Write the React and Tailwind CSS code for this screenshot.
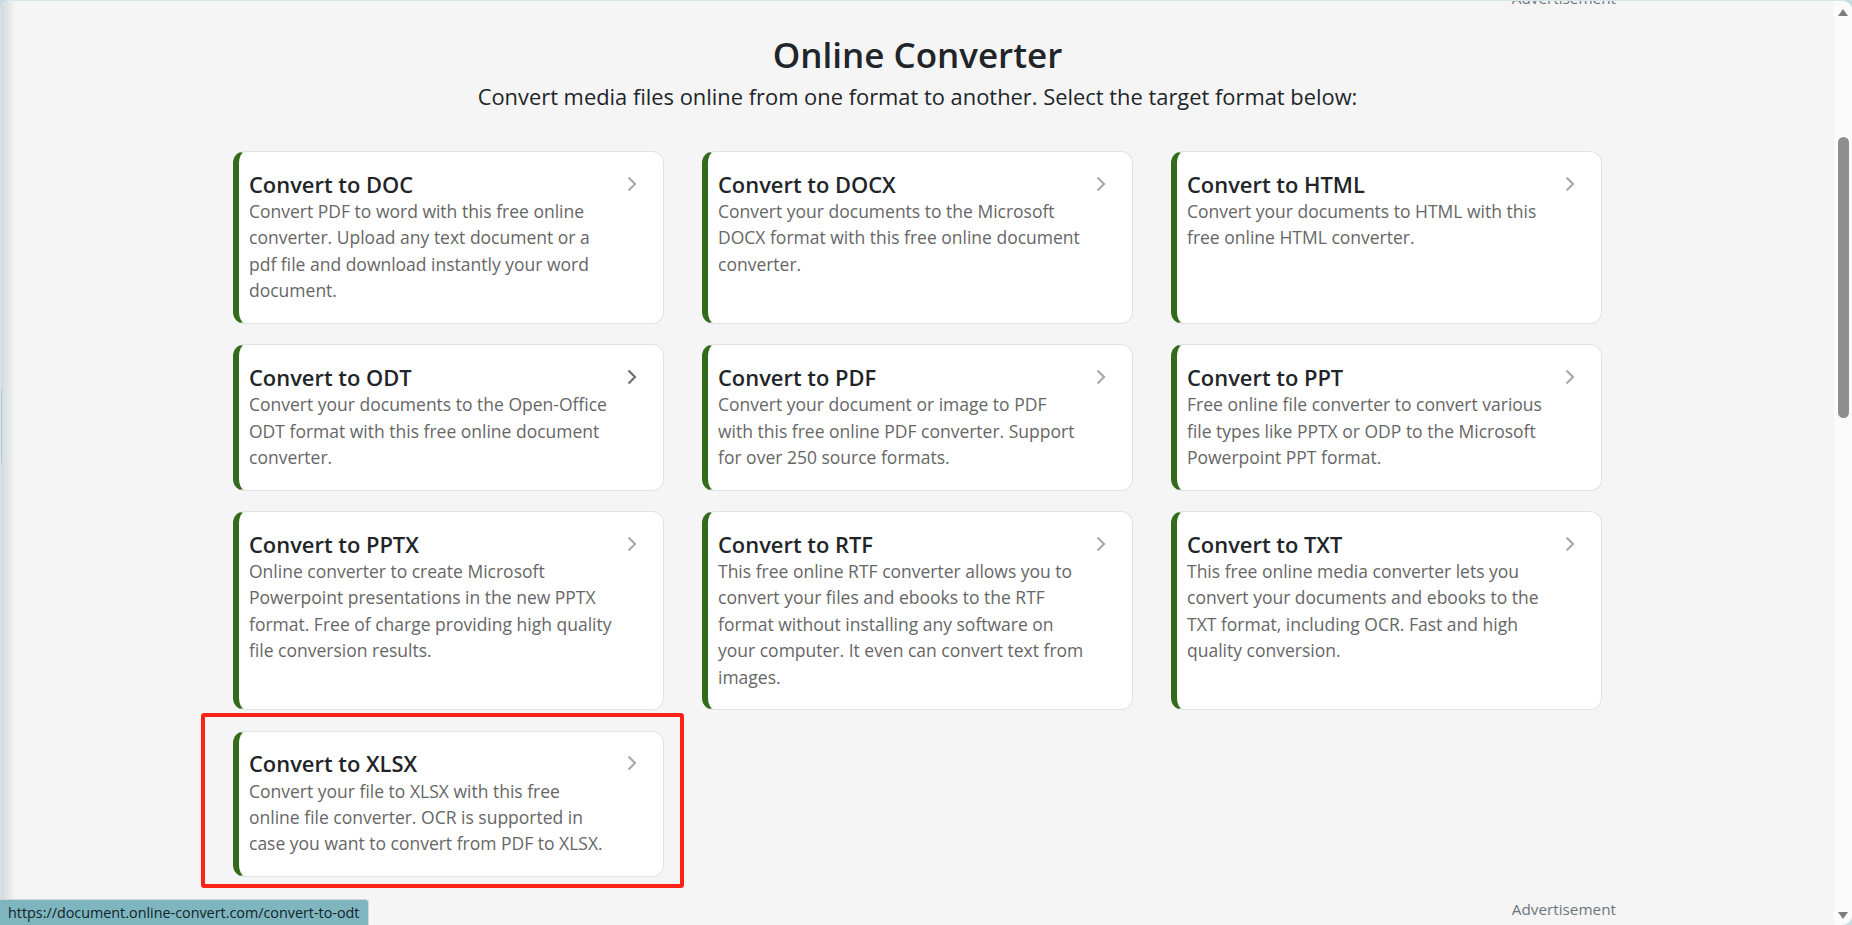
const cards = [
  ["Convert to DOC", "Convert PDF to word with this free online converter. Upload any text document or a pdf file and download instantly your word document."],
  ["Convert to DOCX", "Convert your documents to the Microsoft DOCX format with this free online document converter."],
  ["Convert to HTML", "Convert your documents to HTML with this free online HTML converter."],
  ["Convert to ODT", "Convert your documents to the Open-Office ODT format with this free online document converter.", true],
  ["Convert to PDF", "Convert your document or image to PDF with this free online PDF converter. Support for over 250 source formats."],
  ["Convert to PPT", "Free online file converter to convert various file types like PPTX or ODP to the Microsoft Powerpoint PPT format."],
  ["Convert to PPTX", "Online converter to create Microsoft Powerpoint presentations in the new PPTX format. Free of charge providing high quality file conversion results."],
  ["Convert to RTF", "This free online RTF converter allows you to convert your files and ebooks to the RTF format without installing any software on your computer. It even can convert text from images."],
  ["Convert to TXT", "This free online media converter lets you convert your documents and ebooks to the TXT format, including OCR. Fast and high quality conversion."],
  ["Convert to XLSX", "Convert your file to XLSX with this free online file converter. OCR is supported in case you want to convert from PDF to XLSX.", false, true],
];

function Card({ title, text, hover, marked }) {
  return (
    <div className="relative flex">
      <a className="flex w-full rounded-[12px] border border-l-[6px] border-[#e1e2e6] border-l-[#336b1c] bg-white pl-[10px] pr-[20px] pt-[18.5px] pb-[19.4px]">
        <div className="w-[365.5px]">
          <h3 className="text-[21.9px] leading-[27.5px] font-semibold text-[#212529]">{title}</h3>
          <p className="text-[17.5px] leading-[26.4px] text-[#666666]">{text}</p>
        </div>
        <svg
          className={`ml-[11.5px] mt-[4px] h-[18px] w-[12px] shrink-0 ${hover ? "text-[#6e6e6e]" : "text-[#aaaaaa]"}`}
          viewBox="0 0 12 18"
          fill="none"
          stroke="currentColor"
          strokeWidth="2.2"
        >
          <path d="M2.5 2.5 L9 9 L2.5 15.5" />
        </svg>
      </a>
      {marked && (
        <div className="absolute left-[-32px] right-[-20px] top-[-17.6px] bottom-[-10.6px] rounded-[3px] border-4 border-[#ff2318]" />
      )}
    </div>
  );
}

export default function App() {
  return (
    <div
      className="relative h-[925px] w-full overflow-hidden bg-[#c4dde2]"
      style={{ fontFamily: '"Open Sans", "Noto Sans", sans-serif' }}
    >
      <div className="flex h-full overflow-hidden rounded-[10px] border-t border-l border-[#d5e6e9] bg-[#f5f5f5]">
        <div className="h-full w-[15px] shrink-0 bg-gradient-to-r from-[#d3d9db] to-[#f5f5f5]">
          <div className="mt-[388px] h-[74px] w-[1px] bg-[#b4c6cb]" />
        </div>
        <main className="min-w-0 flex-1 overflow-hidden">
          <div className="-mt-[13px] pr-[218px] text-right text-[15.3px] leading-[20px] text-[#6c757d]">Advertisement</div>
          <div className="ml-[217px] w-[1369px]">
            <h1 className="mt-[23px] text-center text-[35px] leading-[48px] font-semibold text-[#212529]">Online Converter</h1>
            <p className="mt-[3px] text-center text-[21.88px] leading-[30px] text-[#212529]">
              Convert media files online from one format to another. Select the target format below:
            </p>
            <div className="mt-[39px] grid grid-cols-3 gap-x-[38px] gap-y-[20.2px]">
              {cards.map(([t, d, h, m]) => (
                <Card key={t} title={t} text={d} hover={h} marked={m} />
              ))}
            </div>
          </div>
          <div className="mt-[21.4px] pr-[218px] text-right text-[15.3px] leading-[20px] text-[#6c757d]">Advertisement</div>
        </main>
        <aside className="flex h-full w-[18px] shrink-0 flex-col items-center bg-[#fbfbfb]">
          <svg className="mt-[8px] h-[7px] w-[10px] shrink-0" viewBox="0 0 10 7" fill="#7d7d7d"><path d="M5 0 L10 7 L0 7 Z" /></svg>
          <div className="mt-[121px] h-[281px] w-[11px] shrink-0 rounded-[6px] bg-[#8e8e8e]" />
          <svg className="mt-auto mb-[6px] h-[7px] w-[10px] shrink-0" viewBox="0 0 10 7" fill="#7d7d7d"><path d="M0 0 L10 0 L5 7 Z" /></svg>
        </aside>
      </div>
      <div className="absolute bottom-0 left-0 flex h-[26px] w-[369px] items-center rounded-tr-[4px] border-t border-r border-[#d0d8da] bg-[#7fb5bf] pl-[8px] text-[14.35px] text-[#10242a]">
        https://document.online-convert.com/convert-to-odt
      </div>
    </div>
  );
}
